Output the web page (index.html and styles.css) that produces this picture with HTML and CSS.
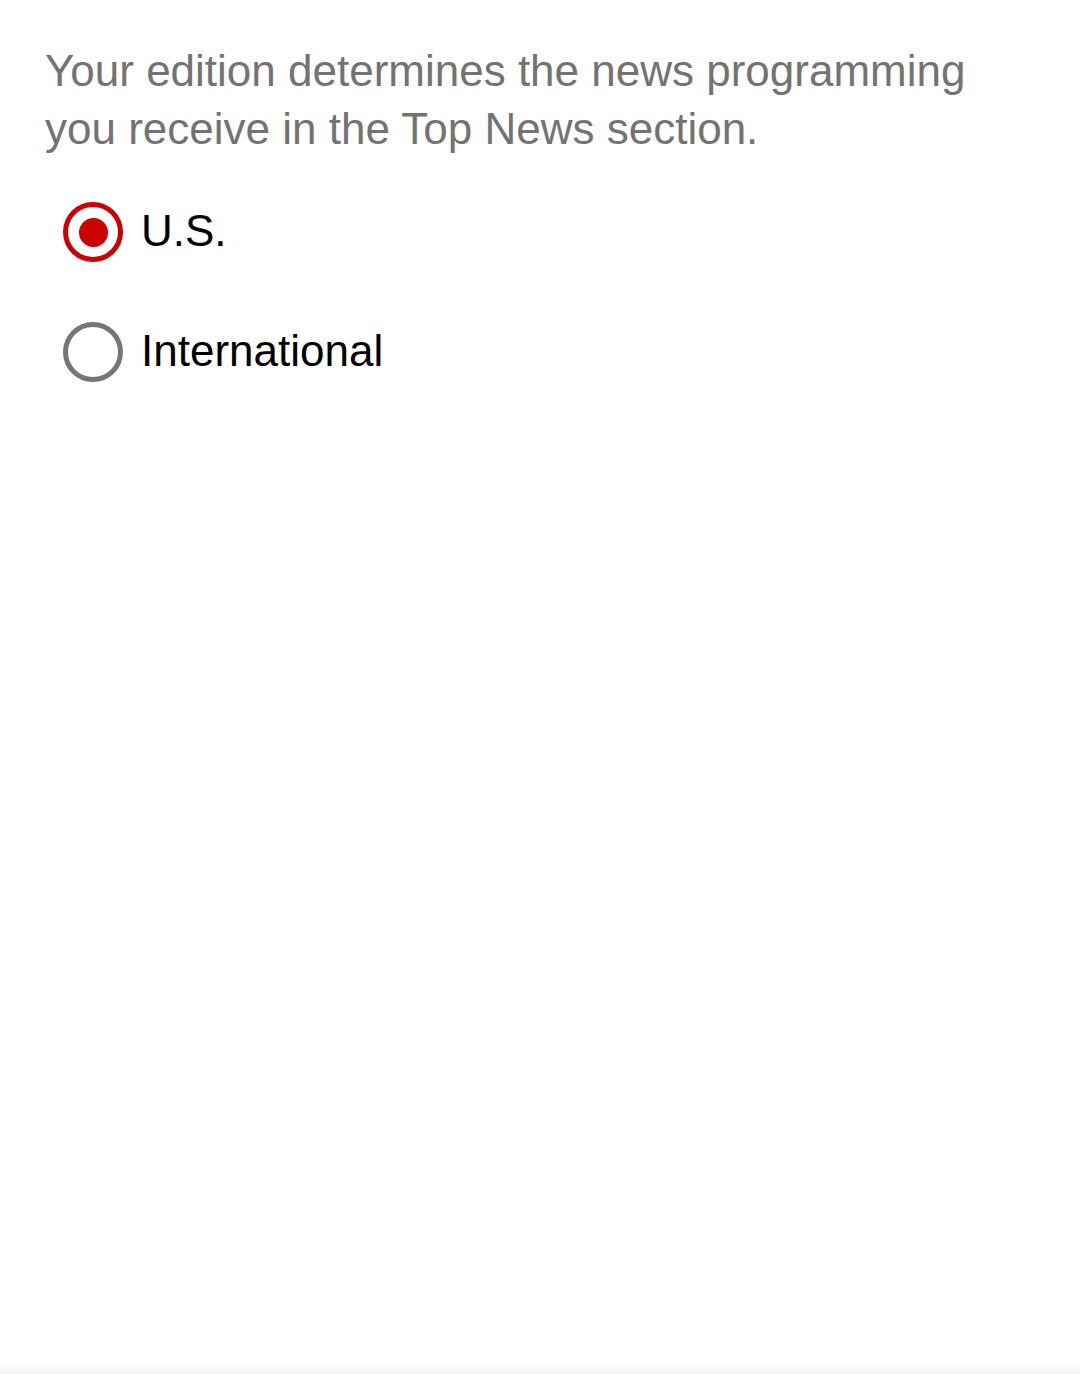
FILE: index.html
```html
<!DOCTYPE html>
<html lang="en">
<head>
<meta charset="utf-8">
<title>Edition</title>
<link rel="stylesheet" href="styles.css">
</head>
<body>
<main class="page">
  <p class="intro">Your edition determines the news programming you receive in the Top News section.</p>
  <div class="options">
    <label class="option">
      <span class="radio radio--on"><span class="dot"></span></span>
      <span class="label">U.S.</span>
    </label>
    <label class="option">
      <span class="radio"></span>
      <span class="label">International</span>
    </label>
  </div>
</main>
<div class="bottom-fade"></div>
</body>
</html>
```
FILE: styles.css
```css
html, body {
  margin: 0;
  padding: 0;
  background: #ffffff;
  height: 100%;
}
body {
  font-family: "Liberation Sans", Arial, Helvetica, sans-serif;
  display: flex;
  flex-direction: column;
  min-height: 1374px;
}
.page {
  flex: 1;
  padding: 42px 60px 0 45px;
}
.intro {
  margin: 0;
  font-size: 44px;
  line-height: 58px;
  color: #737373;
}
.options {
  display: flex;
  flex-direction: column;
  gap: 60px;
  margin-top: 44px;
  padding-left: 18px;
}
.option {
  display: flex;
  align-items: center;
  gap: 18px;
  height: 60px;
}
.radio {
  box-sizing: border-box;
  width: 60px;
  height: 60px;
  border-radius: 50%;
  border: 5px solid #767676;
  display: flex;
  align-items: center;
  justify-content: center;
  flex: none;
}
.radio--on {
  border-color: #cc0000;
}
.dot {
  width: 29px;
  height: 29px;
  border-radius: 50%;
  background: #cc0000;
}
.label {
  font-size: 44px;
  line-height: 50px;
  color: #000000;
  margin-top: -2px;
}
.bottom-fade {
  height: 12px;
  background: linear-gradient(#ffffff, #f2f2f2);
}
```
